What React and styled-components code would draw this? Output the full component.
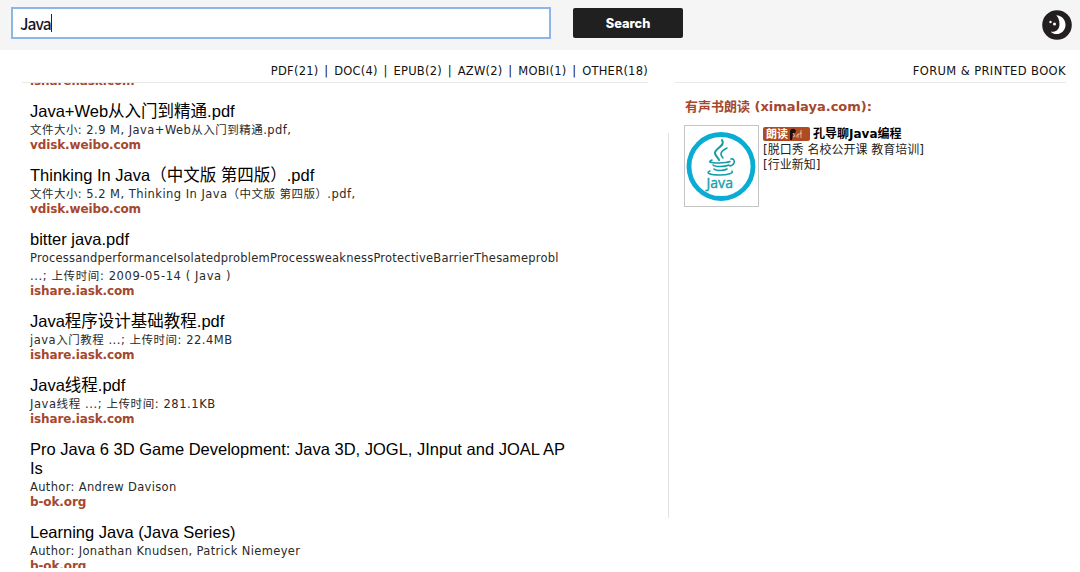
import React from "react";
import styled, { createGlobalStyle } from "styled-components";

const Global = createGlobalStyle`
  * { box-sizing: border-box; }
  body { margin: 0; background: #fff; overflow: hidden; }
`;

const Page = styled.div`
  height: 572px;
  overflow: hidden;
  color: #111;
  font: 12px "DejaVu Sans", "Noto Sans CJK SC", sans-serif;
`;

const SearchBar = styled.header`
  display: flex;
  align-items: flex-start;
  height: 50px;
  padding: 7px 8px 0 11px;
  background: #f5f5f5;
`;

const SearchField = styled.div`
  display: flex;
  align-items: center;
  width: 540px;
  height: 32px;
  padding-left: 7px;
  border: 2px solid #8bb6ea;
  background: #fff;
  color: #16161c;
  font: 500 15.5px/20px "Noto Sans CJK SC", sans-serif;
  letter-spacing: -0.9px;
`;

const Caret = styled.span`
  width: 1px;
  height: 18px;
  background: #222;
`;

const SearchButton = styled.button`
  width: 110px;
  height: 30px;
  margin: 1px 0 0 22px;
  padding: 1px 0 0;
  border: 0;
  border-radius: 2px;
  background: #202020;
  color: #fff;
  font: 800 12.8px/29px Inter, sans-serif;
`;

const NightToggle = styled.div`
  width: 30px;
  height: 30px;
  margin: 3px 0 0 auto;
  svg { display: block; }
`;

const Columns = styled.main`
  display: flex;
  align-items: flex-start;
`;

const Results = styled.section`
  width: 648px;
  padding-left: 22px;
`;

const Nav = styled.nav`
  height: 33px;
  border-bottom: 1px solid #e8e8e8;
  font-size: 11.5px;
  line-height: 42px;
  text-align: right;
  white-space: pre;
  letter-spacing: ${(p) => p.$track || 0}px;
  word-spacing: ${(p) => p.$gap || 0}px;
`;

const ResultList = styled.div`
  display: flex;
  flex-direction: column;
  justify-content: flex-start;
  height: 485px;
  padding-left: 8px;
  overflow: hidden;
`;

const Item = styled.article`
  flex: none;
  margin-bottom: 14px;
  white-space: pre;
  &:first-child { margin-top: -8px; }
`;

const Title = styled.div`
  color: #000;
  font: 16.5px/19px "Liberation Sans", "Noto Sans CJK SC", sans-serif;
`;

const Detail = styled.div`
  color: #2a2a2a;
  font-size: 11.5px;
  line-height: 18px;
  letter-spacing: ${(p) => p.$track || 0}px;
`;

const Site = styled.div`
  margin-top: -1px;
  color: #a5482f;
  font-weight: bold;
  line-height: 14px;
  letter-spacing: -0.12px;
`;

const Divider = styled.div`
  width: 1px;
  height: 385px;
  margin: 83px 0 0 20px;
  background: #e2e2e2;
`;

const Sidebar = styled.aside`
  width: 391px;
  margin-left: 6px;
`;

const Heading = styled.h2`
  margin: 14px 0 9px 10px;
  color: #a5482f;
  font-size: 13px;
  line-height: 19px;
`;

const Book = styled.div`
  display: flex;
  margin-left: 9px;
`;

const Cover = styled.div`
  width: 75px;
  height: 82px;
  border: 1px solid #c4c4c4;
  svg { display: block; }
`;

const BookInfo = styled.div`
  margin-left: 4px;
  line-height: 15px;
  color: #222;
  white-space: pre;
`;

const BookTitle = styled.div`
  display: flex;
  align-items: center;
  height: 18px;
  color: #000;
  font-weight: bold;
`;

const Badge = styled.span`
  display: flex;
  align-items: center;
  width: 47px;
  height: 14px;
  margin-right: 3px;
  padding-left: 3px;
  border-radius: 2px;
  background: #b04a20;
  color: #fff;
  font-size: 11px;
`;

const files = [
  { title: "Java+Web从入门到精通.pdf", detail: [["文件大小: 2.9 M, Java+Web从入门到精通.pdf,", 0.46]], site: "vdisk.weibo.com" },
  { title: "Thinking In Java（中文版 第四版）.pdf", detail: [["文件大小: 5.2 M, Thinking In Java（中文版 第四版）.pdf,", 0.46]], site: "vdisk.weibo.com" },
  { title: "bitter java.pdf", detail: [["ProcessandperformanceIsolatedproblemProcessweaknessProtectiveBarrierThesameprobl", 0.22], ["...; 上传时间: 2009-05-14 ( Java )", 0.6]], site: "ishare.iask.com" },
  { title: "Java程序设计基础教程.pdf", detail: [["java入门教程 ...; 上传时间: 22.4MB", 0.52]], site: "ishare.iask.com" },
  { title: "Java线程.pdf", detail: [["Java线程 ...; 上传时间: 281.1KB", 0.58]], site: "ishare.iask.com" },
  { title: "Pro Java 6 3D Game Development: Java 3D, JOGL, JInput and JOAL AP\nIs", detail: [["Author: Andrew Davison", 0.33]], site: "b-ok.org" },
  { title: "Learning Java (Java Series)", detail: [["Author: Jonathan Knudsen, Patrick Niemeyer", 0.34]], site: "b-ok.org" },
];

const MoonIcon = () => (
  <svg width="30" height="30" viewBox="0 0 30 30">
    <circle cx="15" cy="15" r="14.8" fill="#231f20" />
    <path d="M14.2 5.2C20 5.6 23.5 9.7 23.5 14.8c0 5.5-4 9.3-8.8 9.3-2.5 0-4.5-.8-5.9-2.4 5 .8 8.7-2.5 8.7-7.5 0-3.7-1.1-6.7-3.3-9z" fill="#fff" />
    <circle cx="8.5" cy="12" r="1.2" fill="#fff" />
    <circle cx="12.5" cy="14" r="1.5" fill="#fff" />
  </svg>
);

const JavaLogo = () => (
  <svg width="73" height="80" viewBox="0 0 73 80">
    <circle cx="36" cy="40.5" r="32" fill="#fff" stroke="#09acd2" strokeWidth="4.8" />
    <g fill="none" stroke="#159ba8" strokeLinecap="round">
      <path d="M37 14c4 6-7 8-7 13 0 3 3 4 4 7" strokeWidth="2.1" />
      <path d="M42 22c-6 3-8 6-4 10" strokeWidth="1.5" />
      <path d="M27 34c-4 2-3 3 7 3 5 0 9-.6 11-1.4M28 39c2 2 12 2 16 0M29 43c2 2 10 2 13 0M46 33c4-1 5 5-1 7" strokeWidth="1.6" />
      <path d="M25 45c-5 2 0 4 10 4 8 0 14-2 12-4" strokeWidth="1.5" />
    </g>
    <text x="21.5" y="62" fill="#159fac" stroke="#159fac" strokeWidth=".4" fontFamily="Open Sans, sans-serif" fontSize="15" textLength="26.5" lengthAdjust="spacingAndGlyphs">Java</text>
  </svg>
);

const NarratorIcon = () => (
  <svg width="16" height="14" viewBox="0 0 16 14">
    <path d="M2 4c1-3 5-3 6 0L7 6H5l-1 7H2z" fill="#17120f" />
    <path d="M5 6l2 3-2 1M8 10l2-3v4M10 7h3V3M13 5v6" fill="none" stroke="#e5c9bc" strokeWidth=".8" />
  </svg>
);

export default function App() {
  return (
    <Page>
      <Global />
      <SearchBar>
        <SearchField>Java<Caret /></SearchField>
        <SearchButton>Search</SearchButton>
        <NightToggle><MoonIcon /></NightToggle>
      </SearchBar>
      <Columns>
        <Results>
          <Nav $track={0.25} $gap={1.85}>PDF(21) | DOC(4) | EPUB(2) | AZW(2) | MOBI(1) | OTHER(18)</Nav>
          <ResultList>
            <Item><Site>ishare.iask.com</Site></Item>
            {files.map((f) => (
              <Item key={f.title}>
                <Title>{f.title}</Title>
                {f.detail.map(([text, track]) => <Detail key={text} $track={track}>{text}</Detail>)}
                <Site>{f.site}</Site>
              </Item>
            ))}
          </ResultList>
        </Results>
        <Divider />
        <Sidebar>
          <Nav $track={0.4}>FORUM &amp; PRINTED BOOK</Nav>
          <Heading>有声书朗读 (ximalaya.com):</Heading>
          <Book>
            <Cover><JavaLogo /></Cover>
            <BookInfo>
              <BookTitle><Badge>朗读<NarratorIcon /></Badge>孔导聊Java编程</BookTitle>
              <div>[脱口秀 名校公开课 教育培训]</div>
              <div>[行业新知]</div>
            </BookInfo>
          </Book>
        </Sidebar>
      </Columns>
    </Page>
  );
}
